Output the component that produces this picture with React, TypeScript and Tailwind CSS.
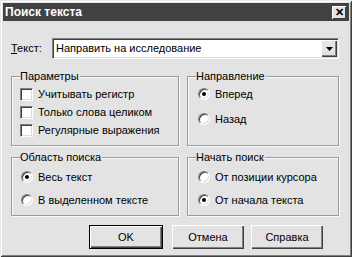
import React from "react";

const font = { fontFamily: '"Liberation Sans", Arial, sans-serif' };

function CheckBox({ label }: { label: string }) {
  return (
    <div className="flex h-[18px] items-center">
      <span className="box-border h-[13px] w-[13px] border border-t-[#808080] border-l-[#808080] border-b-white border-r-white bg-white shadow-[inset_1px_1px_0_#404040,inset_-1px_-1px_0_#dcdcdc]" />
      <span className="ml-[5px] text-[11px] leading-none text-black">{label}</span>
    </div>
  );
}

function Radio({ label, checked }: { label: string; checked?: boolean }) {
  return (
    <div className="flex h-[18px] items-center">
      <span className="relative box-border flex h-[12px] w-[12px] items-center justify-center rounded-full border border-t-[#808080] border-l-[#808080] border-b-white border-r-white bg-white shadow-[inset_1px_1px_0_#404040,inset_-1px_-1px_0_#dcdcdc]">
        {checked && <span className="h-[4px] w-[4px] rounded-full bg-black" />}
      </span>
      <span className="ml-[5px] text-[11px] leading-none text-black">{label}</span>
    </div>
  );
}

function Group({
  title,
  className,
  children,
}: {
  title: string;
  className: string;
  children: React.ReactNode;
}) {
  return (
    <div
      className={
        "relative box-border border border-[#9a9a9a] shadow-[inset_1px_1px_0_#fafafa,1px_1px_0_#fafafa] " +
        className
      }
    >
      <span className="absolute left-[8px] top-[-7px] bg-[#e3e3e3] pr-[1px] text-[11px] leading-[12px] text-black">
        {title}
      </span>
      {children}
    </div>
  );
}

function Button({
  label,
  isDefault,
  className,
}: {
  label: string;
  isDefault?: boolean;
  className: string;
}) {
  return (
    <div
      className={
        "box-border flex h-[24px] items-center justify-center bg-[#e3e3e3] text-[11px] text-black " +
        (isDefault
          ? "border border-black shadow-[inset_1px_1px_0_#fff,inset_-1px_-1px_0_#404040,inset_-2px_-2px_0_#808080] "
          : "shadow-[inset_1px_1px_0_#fff,inset_-1px_-1px_0_#404040,inset_-2px_-2px_0_#808080] ") +
        className
      }
    >
      {label}
    </div>
  );
}

export default function App() {
  return (
    <div
      style={font}
      className="box-border flex h-[257px] w-[352px] flex-col bg-[#e3e3e3] p-[3px] shadow-[inset_1px_1px_0_#e8e8e8,inset_-1px_-1px_0_#404040,inset_2px_2px_0_#fff,inset_-2px_-2px_0_#808080]"
    >
      {/* title bar */}
      <div className="flex h-[18px] items-center justify-between bg-[#424242] pl-[2px] pr-[3px]">
        <span className="text-[12px] font-bold leading-none text-white">Поиск текста</span>
        <span className="box-border flex h-[13px] w-[14px] items-center justify-center bg-[#e3e3e3] shadow-[inset_1px_1px_0_#fff,inset_-1px_-1px_0_#404040] text-[11px] font-bold leading-none text-black">
          ✕
        </span>
      </div>

      <div className="flex flex-col pl-[8px] pr-[10px]">
        {/* text row */}
        <div className="mt-[17px] flex h-[21px] items-center">
          <span className="w-[41px] text-[11px] leading-none text-black">
            <span className="underline">Т</span>екст:
          </span>
          <div className="box-border flex h-[21px] flex-1 items-center border border-t-[#808080] border-l-[#808080] border-b-white border-r-white bg-white pl-[3px] shadow-[inset_1px_1px_0_#404040,inset_-1px_-1px_0_#dcdcdc]">
            <span className="flex-1 text-[11px] leading-none text-black">
              Направить на исследование
            </span>
            <span className="mr-[1px] box-border flex h-[17px] w-[16px] items-center justify-center bg-[#e3e3e3] shadow-[inset_1px_1px_0_#fff,inset_-1px_-1px_0_#404040,inset_-2px_-2px_0_#808080]">
              <svg width="7" height="4" viewBox="0 0 7 4">
                <path d="M0 0h7L3.5 4z" fill="#000" />
              </svg>
            </span>
          </div>
        </div>

        {/* groups row 1 */}
        <div className="mt-[17px] flex gap-[8px]">
          <Group title="Параметры" className="h-[70px] w-[169px] pl-[8px] pt-[8px]">
            <CheckBox label="Учитывать регистр" />
            <CheckBox label="Только слова целиком" />
            <CheckBox label="Регулярные выражения" />
          </Group>
          <Group title="Направление" className="flex h-[70px] w-[153px] flex-col gap-[7px] pl-[10px] pt-[8px]">
            <Radio label="Вперед" checked />
            <Radio label="Назад" />
          </Group>
        </div>

        {/* groups row 2 */}
        <div className="mt-[11px] flex gap-[8px]">
          <Group title="Область поиска" className="flex h-[59px] w-[169px] flex-col gap-[5px] pl-[9px] pt-[10px]">
            <Radio label="Весь текст" checked />
            <Radio label="В выделенном тексте" />
          </Group>
          <Group title="Начать поиск" className="flex h-[59px] w-[153px] flex-col gap-[5px] pl-[10px] pt-[10px]">
            <Radio label="От позиции курсора" />
            <Radio label="От начала текста" checked />
          </Group>
        </div>

        {/* buttons */}
        <div className="mt-[9px] flex pl-[78px]">
          <Button label="OK" isDefault className="w-[74px]" />
          <Button label="Отмена" className="ml-[9px] w-[72px]" />
          <Button label="Справка" className="ml-[7px] w-[72px]" />
        </div>
      </div>
    </div>
  );
}
